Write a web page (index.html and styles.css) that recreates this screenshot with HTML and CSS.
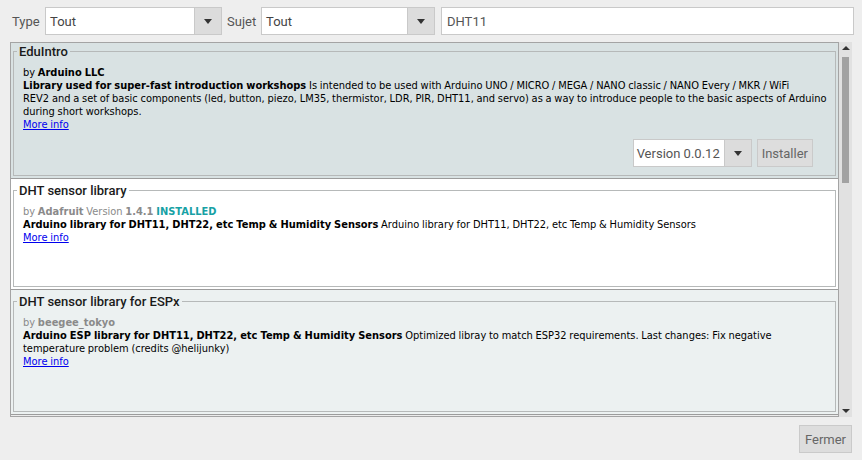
FILE: index.html
```html
<!DOCTYPE html>
<html>
<head>
<meta charset="utf-8">
<link rel="stylesheet" href="styles.css">
</head>
<body>
<div class="top">
  <span class="lbl l1">Type</span>
  <div class="combo w1"><span class="val">Tout</span><span class="arrow"><i class="tri"></i></span></div>
  <span class="lbl l2">Sujet</span>
  <div class="combo w2"><span class="val">Tout</span><span class="arrow"><i class="tri"></i></span></div>
  <div class="search">DHT11</div>
</div>
<div class="main">
  <div class="viewport">
    <div class="scrollinner">
      <div class="item sel">
        <fieldset class="box">
          <legend>EduIntro</legend>
          <div class="content c1">
            <div class="txt">by <b>Arduino LLC</b><br><b>Library used for super-fast introduction workshops</b> Is intended to be used with Arduino UNO / MICRO / MEGA / NANO classic / NANO Every / MKR / WiFi<br>REV2 and a set of basic components (led, button, piezo, LM35, thermistor, LDR, PIR, DHT11, and servo) as a way to introduce people to the basic aspects of Arduino<br>during short workshops.<br><a class="more">More info</a></div>
            <div class="actions">
              <div class="combo ver"><span class="val">Version 0.0.12</span><span class="arrow"><i class="tri"></i></span></div>
              <div class="btn">Installer</div>
            </div>
          </div>
        </fieldset>
      </div>
      <div class="item white">
        <fieldset class="box">
          <legend>DHT sensor library</legend>
          <div class="content c2">
            <div class="txt"><span class="grey">by <b>Adafruit</b> Version <b>1.4.1</b></span> <b class="inst">INSTALLED</b><br><b>Arduino library for DHT11, DHT22, etc Temp &amp; Humidity Sensors</b> Arduino library for DHT11, DHT22, etc Temp &amp; Humidity Sensors<br><a class="more">More info</a></div>
          </div>
        </fieldset>
      </div>
      <div class="item light">
        <fieldset class="box">
          <legend>DHT sensor library for ESPx</legend>
          <div class="content c3">
            <div class="txt"><span class="grey">by <b>beegee_tokyo</b></span><br><b>Arduino ESP library for DHT11, DHT22, etc Temp &amp; Humidity Sensors</b> Optimized libray to match ESP32 requirements. Last changes: Fix negative<br>temperature problem (credits @helijunky)<br><a class="more">More info</a></div>
          </div>
        </fieldset>
      </div>
    </div>
  </div>
  <div class="scrollbar">
    <span class="up"></span>
    <span class="thumb"></span>
    <span class="spacer"></span>
    <span class="down"></span>
  </div>
</div>
<div class="footer"><div class="btn fermer">Fermer</div></div>
</body>
</html>
```
FILE: styles.css
```css
* { box-sizing: border-box; }
html, body { margin: 0; padding: 0; }
body {
  width: 862px;
  height: 460px;
  background: #eeeeee;
  font-family: Roboto, "DejaVu Sans", sans-serif;
  font-size: 13px;
  color: #555;
  overflow: hidden;
}
.top {
  display: flex;
  align-items: center;
  padding: 7px 0 0 12px;
  height: 35px;
}
.lbl { color: #555; white-space: nowrap; }
.l1 { width: 33px; }
.l2 { width: 34px; }
.combo {
  display: flex;
  height: 28px;
  border: 1px solid #c9c9c9;
  background: #fff;
}
.combo .val {
  flex: 1;
  display: flex;
  align-items: center;
  padding-left: 4px;
  color: #444;
}
.combo .arrow {
  width: 27px;
  background: #dcdcdc;
  border-left: 1px solid #c9c9c9;
  display: flex;
  align-items: center;
  justify-content: center;
}
.tri {
  width: 0; height: 0;
  border-left: 4px solid transparent;
  border-right: 4px solid transparent;
  border-top: 5px solid #333;
}
.w1 { width: 177px; margin-right: 5px; }
.w2 { width: 174px; margin-right: 6px; }
.search {
  width: 413px;
  height: 28px;
  border: 1px solid #c9c9c9;
  background: #fff;
  display: flex;
  align-items: center;
  padding-left: 5px;
  color: #555;
}
.main {
  display: flex;
  margin: 7px 10px 0 10px;
  height: 375px;
}
.viewport {
  flex: 1;
  border: 1px solid #a4a4a4;
  background: #ececec;
  overflow: hidden;
}
.scrollinner { margin-top: -3px; }
.item {
  padding: 4px 2px 2px 2px;
  border-bottom: 1px solid #9c9c9c;
}
.sel { background: #d9e2e3; }
.white { background: #ffffff; }
.light { background: #ecf1f1; }
.box {
  margin: 0;
  padding: 0;
  min-width: 0;
  border: 1px solid #b6b9b9;
}
.box legend {
  margin-left: 3px;
  padding: 0 2px;
  font-family: Roboto, sans-serif;
  font-weight: 500;
  font-size: 13px;
  line-height: 15px;
  color: #1a1a1a;
}
.content {
  padding: 7px 9px 0 9px;
}
.c1 { height: 116px; display: flex; flex-direction: column; }
.c2 { height: 88px; }
.c3 { height: 102px; }
.txt {
  font-family: "DejaVu Sans", sans-serif;
  font-size: 9.9px;
  word-spacing: -0.4px;
  line-height: 13px;
  color: #000;
  white-space: nowrap;
}
.txt b { font-weight: bold; }
.grey { color: #8a8a8a; }
.inst { color: #17a1a5; }
.more { color: #0000ee; text-decoration: underline; }
.actions {
  display: flex;
  justify-content: flex-end;
  margin-top: 8px;
  margin-right: 13px;
}
.ver { width: 119px; margin-right: 5px; }
.ver .val { color: #555; padding-left: 3px; }
.btn {
  height: 28px;
  padding: 0 4px;
  border: 1px solid #cacaca;
  background: #dddddd;
  color: #666;
  display: flex;
  align-items: center;
}
.scrollbar {
  width: 13px;
  background: #e1e1e1;
  display: flex;
  flex-direction: column;
  align-items: center;
  padding: 4px 0 4px 0;
}
.up {
  width: 0; height: 0;
  border-left: 4px solid transparent;
  border-right: 4px solid transparent;
  border-bottom: 4px solid #333;
}
.thumb {
  width: 7px;
  height: 126px;
  margin-top: 7px;
  background: #a2a2a2;
}
.spacer { flex: 1; }
.down {
  width: 0; height: 0;
  border-left: 4px solid transparent;
  border-right: 4px solid transparent;
  border-top: 4px solid #333;
}
.footer {
  display: flex;
  justify-content: flex-end;
  padding: 8px 10px 0 0;
}
.fermer { padding: 0 5px; }
```
